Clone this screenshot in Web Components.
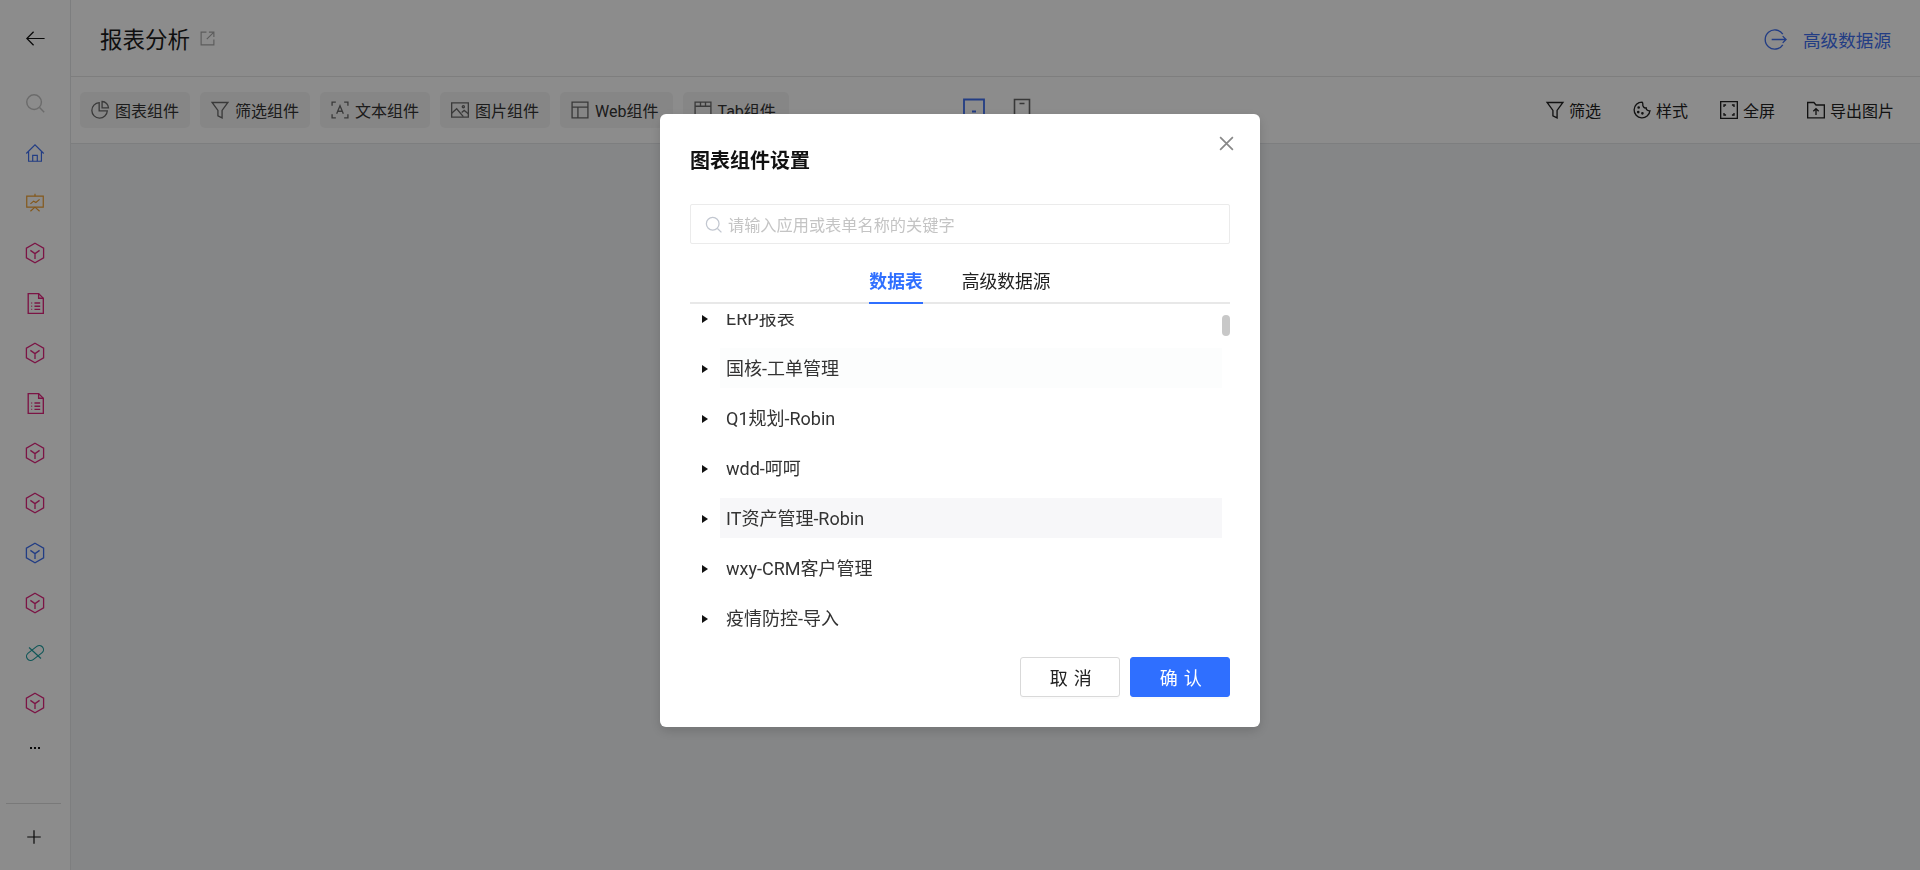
<!DOCTYPE html>
<html lang="zh"><head><meta charset="utf-8"><title>报表分析</title>
<style>
html,body{margin:0;height:100%;overflow:hidden;background:#fff;font-family:Roboto,"Noto Sans CJK SC",sans-serif;color:#222}
</style></head><body>
<report-app>
  <side-bar slot="side"></side-bar>
  <top-header slot="head"></top-header>
  <tool-bar slot="tools">
    <tool-btn slot="left" icon="pie">图表组件</tool-btn>
    <tool-btn slot="left" icon="filter">筛选组件</tool-btn>
    <tool-btn slot="left" icon="textbox">文本组件</tool-btn>
    <tool-btn slot="left" icon="image">图片组件</tool-btn>
    <tool-btn slot="left" icon="layout" style="padding-right:14px">Web组件</tool-btn>
    <tool-btn slot="left" icon="tab" style="padding-right:13px">Tab组件</tool-btn>
    <tool-link slot="right" icon="filter2">筛选</tool-link>
    <tool-link slot="right" icon="palette">样式</tool-link>
    <tool-link slot="right" icon="full">全屏</tool-link>
    <tool-link slot="right" icon="export">导出图片</tool-link>
  </tool-bar>
</report-app>
<modal-overlay>
  <chart-dialog>
    <tree-row>ERP报表</tree-row>
    <tree-row tone="faint">国核-工单管理</tree-row>
    <tree-row>Q1规划-Robin</tree-row>
    <tree-row>wdd-呵呵</tree-row>
    <tree-row tone="hover">IT资产管理-Robin</tree-row>
    <tree-row>wxy-CRM客户管理</tree-row>
    <tree-row>疫情防控-导入</tree-row>
  </chart-dialog>
</modal-overlay>
<script>
const cube='<path d="M12 2.2 20.6 7.1V16.9L12 21.8 3.4 16.9V7.1Z"/><path d="M7.4 9.4 12 12.6 16.6 9.4M12 12.6V18"/>';
const doc='<path d="M5 2.5H15L19.5 7V21.5H5Z"/><path d="M15 2.5V7H19.5"/><path d="M8 11.5H8.8M11 11.5H16.5M8 14.6H8.8M11 14.6H16.5M8 17.7H8.8M11 17.7H16.5"/>';
const ICONS={
  back:'<path d="M21.5 12H3M10 5 3 12l7 7"/>',
  search:'<circle cx="11" cy="11" r="8"/><path d="M17 17l5 5"/>',
  home:'<path d="M2.5 12.5 12 3l9.5 9.5M5 10.5V21H19V10.5"/><path d="M9.5 21V14.5H14.5V21"/>',
  board:'<path d="M3 4.5H21V16.5H3Z"/><path d="M12 2V4.5M12 16.5 7 21M12 16.5 17 21"/><path d="M7 13l3.5-3 2.5 1.5L17 8"/>',
  cube:cube, doc:doc,
  link:'<rect x="1.5" y="7.5" width="21" height="9" rx="4.5" transform="rotate(-38 12 12)"/><path d="M5.5 6 18.5 18"/>',
  plus:'<path d="M12 3V21M3 12H21"/>',
  ext:'<path d="M10.5 3H3V21H21V13.5"/><path d="M14 3H21V10M21 3 11 13"/>',
  exit:'<path d="M19.6 6.5A10 10 0 1 0 19.6 17.5"/><path d="M8 12H23M19.5 8.5 23 12l-3.5 3.5"/>',
  pie:'<path d="M11 3.2A9.3 9.3 0 1 0 20.8 13H11Z"/><path d="M14.5 1.8A8 8 0 0 1 22.2 9.5H14.5Z"/>',
  filter:'<path d="M2.5 3H21.5L14.5 12.5V21.5L9.5 19V12.5Z"/>',
  filter2:'<path d="M2.5 3H21.5L14.5 12.5V21.5L9.5 19V12.5Z"/>',
  textbox:'<path d="M2.5 7V2.5H7M17 2.5H21.5V7M2.5 17V21.5H7M17 21.5H21.5V17"/><path d="M8 16.5 12 7l4 9.5M9.5 13.5H14.5"/>',
  image:'<path d="M2 3.5H22V20.5H2Z"/><path d="M2 16 8 10.5l8 9.5M14 15l3-2.5 5 4"/><circle cx="16" cy="8" r="1.3"/>',
  layout:'<path d="M2.5 2.5H21.5V21.5H2.5Z"/><path d="M2.5 8.5H21.5M9.5 8.5V21.5"/>',
  tab:'<path d="M2.5 21.5V2.5H21.5V21.5"/><path d="M2.5 7.5H21.5M9 2.5V7.5M15 2.5V7.5"/>',
  palette:'<path d="M12 2.5A9.5 9.5 0 1 0 21.5 13C19.5 13.5 17 12 17 9.5 14.5 10 12.5 7.5 13 5 13 4 12.8 3 12 2.5Z"/><circle cx="8" cy="9" r=".8"/><circle cx="7.5" cy="14.5" r=".8"/><circle cx="12.5" cy="16" r=".8"/>',
  full:'<path d="M2 2H22V22H2Z"/><path d="M6 8.5V6H8.5M15.5 6H18V8.5M6 15.5V18H8.5M15.5 18H18V15.5"/>',
  export:'<path d="M2 21.5V3H9.5L12 6H22V21.5Z"/><path d="M12 18V10.5M8.8 13.5 12 10.3l3.2 3.2"/>',
  monitor:'<path d="M2 1.5H22V19H2Z"/><path d="M10 13.5H14M8 19V23M16 19V23"/>',
  phone:'<path d="M4.5 1.5H19.5V22.5H4.5Z"/><path d="M9.5 5.5H14.5M9.5 18.5H14.5"/>',
  close:'<path d="M3 3 21 21M21 3 3 21"/>'
};
function ico(name,size,color,sw,extra){
  return `<svg ${extra||''} width="${size}" height="${size}" viewBox="0 0 24 24" fill="none" stroke="${color}" stroke-width="${sw}" aria-hidden="true">${ICONS[name]}</svg>`;
}
class Base extends HTMLElement{
  constructor(){super();this.attachShadow({mode:'open'}).innerHTML=this.markup();}
  markup(){return ''}
}
customElements.define('report-app',class extends Base{markup(){return `<style>
:host{display:grid;grid-template-columns:71px 1fr;grid-template-rows:77px 67px 1fr;width:1920px;height:870px;background:#fff}
.side{grid-row:1/4;display:flex}.main{background:#f2f4f6}
::slotted(side-bar){flex:1}
</style><div class="side"><slot name="side"></slot></div><slot name="head"></slot><slot name="tools"></slot><div class="main"></div>`}});

customElements.define('side-bar',class extends Base{markup(){
  const mag='#e0267e',items=[['home','#3f6ff0',22],['board','#f0a030',22],['cube',mag,24],['doc',mag,25],['cube',mag,24],['doc',mag,25],['cube',mag,24],['cube',mag,24],['cube','#3f6ff0',24],['cube',mag,24],['link','#1f9ea0',22],['cube',mag,24]];
  return `<style>
:host{display:flex;flex-direction:column;box-sizing:border-box;height:870px;border-right:1px solid #e3e5e8;background:#fff}
.i{height:50px;display:flex;align-items:center;justify-content:center}
.back{height:76px;display:flex;align-items:center;justify-content:center}
.s{height:50px;padding-top:2px;display:flex;align-items:center;justify-content:center}
.dots{height:40px;display:flex;align-items:center;justify-content:center;gap:2px}
.dots b{width:2px;height:2px;background:#111}
.foot{margin:auto 9px 0 6px;border-top:1px solid #dcdcdc;height:66px;display:flex;align-items:center;justify-content:center}
</style><div class="back">${ico('back',23,'#111',1.3)}</div>
<div class="s">${ico('search',22,'#c4c4c4',1.6)}</div>
${items.map(([n,c,s])=>`<div class="i">${ico(n,s,c,1.3)}</div>`).join('')}
<div class="dots"><b></b><b></b><b></b></div>
<div class="foot">${ico('plus',18,'#111',1.6)}</div>`}});

customElements.define('top-header',class extends Base{markup(){return `<style>
:host{display:flex;align-items:center;box-sizing:border-box;height:77px;padding:0 29px 0 29px;border-bottom:1px solid #e6e6e6;background:#fff}
h1{margin:0;font-size:22.5px;font-weight:400;color:#1c1c1c}
.ext{margin-left:9px;display:flex}
.src{margin-left:auto;display:flex;align-items:center;gap:16px;color:#3f6ff0;font-size:17.6px;margin-top:2px}
</style><h1>报表分析</h1><span class="ext">${ico('ext',17,'#a8a8a8',1.6)}</span>
<div class="src">${ico('exit',23,'#3f6ff0',1.4)}<span>高级数据源</span></div>`}});

customElements.define('tool-bar',class extends Base{markup(){return `<style>
:host{display:grid;grid-template-columns:1fr auto 1fr;align-items:center;box-sizing:border-box;height:67px;padding:0 26px 0 9px;border-bottom:1px solid #e3e5e8;background:#fff}
.l{display:flex;gap:10px}.r{display:flex;gap:31px;justify-content:flex-end}
.c{display:flex;gap:24px;align-items:center;margin-left:21px}
</style><div class="l"><slot name="left"></slot></div>
<div class="c">${ico('monitor',24,'#3f6ff0',1.8)}${ico('phone',24,'#666',1.6)}</div>
<div class="r"><slot name="right"></slot></div>`}});

customElements.define('tool-btn',class extends Base{markup(){return `<style>
:host{display:inline-flex;align-items:center;gap:5px;height:36px;padding:0 11px 0 10px;border-radius:5px;background:#f5f5f5;font-size:16px;color:#333;white-space:nowrap}
</style>${ico(this.getAttribute('icon'),20,'#6a6a6a',1.6)}<slot></slot>`}});

customElements.define('tool-link',class extends Base{markup(){return `<style>
:host{display:inline-flex;align-items:center;gap:4px;font-size:16px;color:#222;white-space:nowrap}
</style>${ico(this.getAttribute('icon'),20,'#222',1.6)}<slot></slot>`}});

customElements.define('modal-overlay',class extends Base{markup(){return `<style>
:host{position:fixed;inset:0;background:rgba(0,0,0,.45);display:flex;justify-content:center;align-items:flex-start;padding-top:114px;box-sizing:border-box}
</style><slot></slot>`}});

customElements.define('chart-dialog',class extends Base{markup(){return `<style>
:host{position:relative;display:flex;flex-direction:column;box-sizing:border-box;width:600px;height:613px;padding:32px 30px 30px;background:#fff;border-radius:6px;box-shadow:0 4px 12px rgba(0,0,0,.15)}
h2{margin:0;height:28px;line-height:30px;font-size:20px;font-weight:700;color:#111}
.x{position:absolute;top:21px;right:25px;display:flex}
.search{box-sizing:border-box;margin-top:30px;height:40px;border:1px solid #ebebeb;border-radius:2px;display:flex;align-items:center;gap:5px;padding:0 13px;color:#c4c4c4;font-size:16.2px;flex:none}
.tabs{flex:none;height:60px;box-sizing:border-box;border-bottom:2px solid #e8e8e8;display:flex;justify-content:center;gap:39px;align-items:flex-end;font-size:17.8px;color:#222}
.tab{height:36px;box-sizing:border-box;line-height:28px;margin-bottom:-2px;border-bottom:2px solid transparent}
.tab.on{color:#2f6fff;font-weight:700;border-bottom-color:#2f6fff}
.list{position:relative;flex:none;height:334px;margin-top:10px;overflow:hidden}
.inner{margin-top:-16px;display:flex;flex-direction:column;gap:10px}
.bar{position:absolute;top:1px;right:0;width:8px;height:21px;border-radius:4px;background:#c8c8c8}
.foot{flex:none;display:flex;justify-content:flex-end;gap:10px;margin-top:9px}
.btn{box-sizing:border-box;width:100px;height:40px;border:1px solid #d9d9d9;border-radius:3px;background:#fff;font-size:18px;color:#222;display:flex;align-items:center;justify-content:center;letter-spacing:.34em;text-indent:.42em;box-shadow:0 2px 0 rgba(0,0,0,.015)}
.btn.p{background:#2f6fff;border-color:#2f6fff;color:#fff}
</style><h2>图表组件设置</h2>
<span class="x">${ico('close',17,'#888',2.4)}</span>
<div class="search">${ico('search',19,'#c2c7d0',1.6)}<span>请输入应用或表单名称的关键字</span></div>
<div class="tabs"><div class="tab on">数据表</div><div class="tab">高级数据源</div></div>
<div class="list"><div class="inner"><slot></slot></div><div class="bar"></div></div>
<div class="foot"><div class="btn">取消</div><div class="btn p">确认</div></div>`}});

customElements.define('tree-row',class extends Base{markup(){
  const t=this.getAttribute('tone');
  return `<style>
:host{display:flex;align-items:center;height:40px;font-size:18px;color:#333;flex:none}
.a{width:18px;margin-right:12px;display:flex;justify-content:flex-end;padding-top:2px}
.a i{display:block;width:0;height:0;border-left:6px solid #111;border-top:4px solid transparent;border-bottom:4px solid transparent}
.t{width:502px;box-sizing:border-box;height:40px;line-height:41px;padding-left:6px;background:${t==='hover'?'#f7f7f9':t==='faint'?'#fcfdfd':'transparent'};white-space:nowrap}
</style><span class="a"><i></i></span><span class="t"><slot></slot></span>`}});
</script>
</body></html>
